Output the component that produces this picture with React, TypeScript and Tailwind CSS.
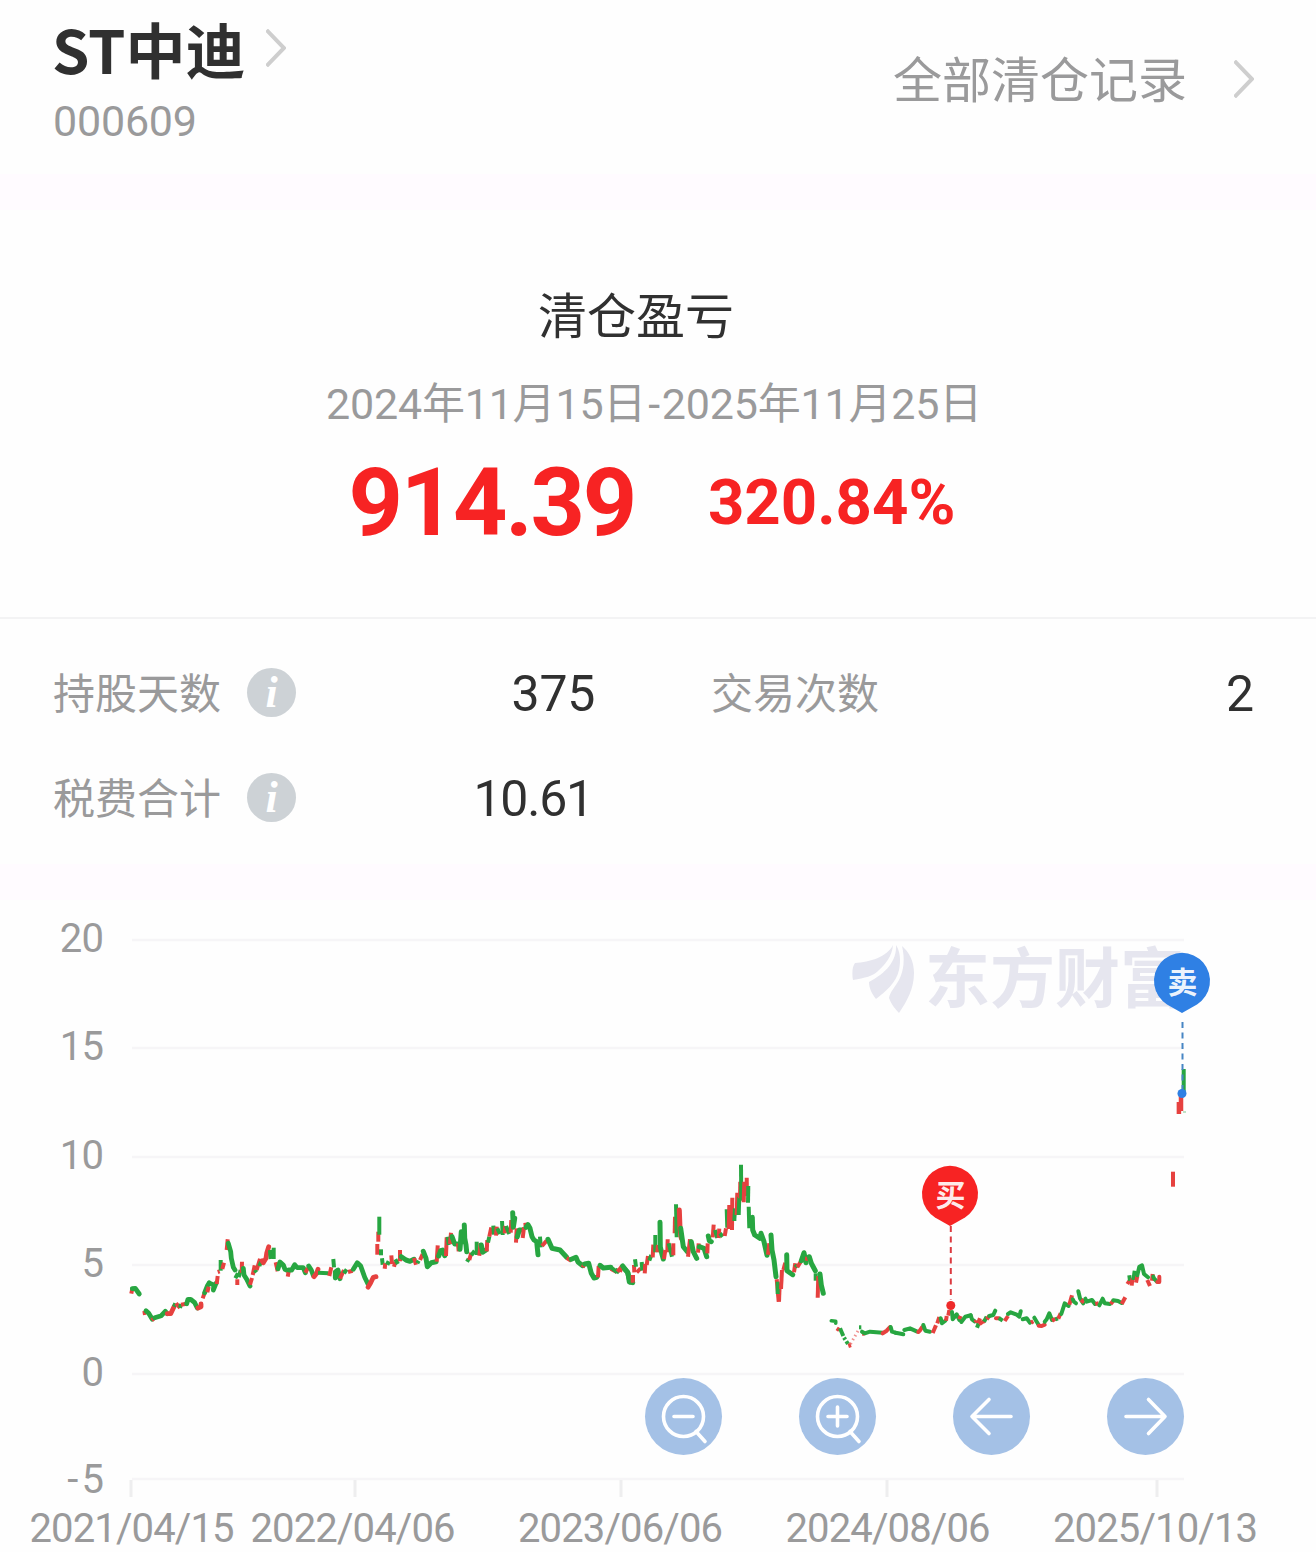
import { useState } from 'react';

type Tone = 'r' | 'g';

interface Section {
  x: number;
  y: number;
  weight: number;
  // "tone x,y x,y ..." with points in thirds of a pixel from the section origin
  strokes: string;
}

const GREEN = '#27a641';
const RED = '#e6413f';

const SECTIONS: Section[] = [
  {
    x: 120, y: 1190, weight: 4.8,
    strokes: `r 34,311 37,296|g 37,296 46,295 58,312|r 68,370 78,368|g 78,362 86,370 97,388|r 95,391 104,383|g 104,383 124,377 136,364 142,371
      |r 142,371 152,371 162,350|g 162,350 166,340|r 168,340 180,354|g 180,354 183,342|r 183,344 200,341|g 200,341 204,328 212,328 224,338 232,354|r 234,354 243,350 243,342
      |r 248,325 254,308|g 254,308 262,288 268,278|r 262,307 266,290|g 268,280 282,285 280,300 288,280|r 290,282 293,258|r 293,246 299,244|g 302,210 302,242|r 307,237 312,218
      |r 320,180 323,148|g 325,160 332,185 334,205 340,232 345,240|g 346,265 354,250|r 352,285 352,268|g 356,262 362,240|r 365,248 366,215|g 370,235 372,255 380,268 390,288
      |r 390,284 396,264|r 398,255 404,226|g 404,240 410,247|r 410,240 420,206|g 418,228 424,215|r 426,212 430,218 438,205 440,190 446,170|g 450,180 452,207|g 461,173 461,207
      |r 467,217 473,244|g 474,236 480,216 490,225 495,238 503,242|r 503,260 506,245|g 506,240 515,240 524,224 532,233 550,233 556,248|r 556,248 564,234|g 566,228 574,240 580,256
      |r 582,260 590,250 594,238|g 594,248 626,250|r 628,258 634,232|g 640,207 642,232|g 646,264 646,246 654,240 660,266|r 660,266 672,240|g 672,250 680,238|r 684,246 698,242
      |g 700,238 712,218 722,228 734,262 744,282|r 744,292 752,278 760,262 768,260|r 772,194 772,162|r 775,155 775,125|g 778,134 778,80`,
  },
  {
    x: 370, y: 1190, weight: 5,
    strokes: `g 33,196 33,178|g 36,205 38,224|r 44,236 46,220|g 48,216 60,222|r 64,196 66,222|r 72,230 76,215|g 76,208 84,222|r 90,180 90,214|g 94,200 108,210 120,214 132,208
      |r 132,204 138,224|g 142,220 146,212|r 150,210 158,192|g 160,184 168,205 172,230 184,218 198,215|r 200,215 203,166|g 206,198 212,182 218,180 224,197|r 228,198 230,142
      |g 233,140 236,165|r 240,162 243,128|g 246,140 254,162 262,162|r 264,160 266,184|g 270,178 274,125 278,155|g 283,105 284,145 288,165 290,185|g 291,215 296,206|r 298,210 304,188
      |g 304,196 314,182|g 320,155 320,195|r 328,197 332,160|g 334,165 338,187 348,180|r 350,184 352,150|g 354,158 358,140|r 358,140 364,112|g 370,107 372,134|r 378,137 380,110
      |g 382,115 390,132|g 396,93 398,135|r 404,130 406,108|g 408,108 418,132|r 422,128 424,90|g 428,68 430,112 434,85|r 438,158 440,115|g 442,140 448,120 454,120|r 458,144 462,112
      |r 466,98 468,118|g 468,112 474,104 480,115 486,140 492,150 500,155 504,194|g 510,140 512,172|r 516,168 530,152|g 534,148 546,175 570,180 590,202|r 590,204 604,212
      |g 604,208 618,202 624,216 638,227|r 638,232 644,220|g 644,222 656,220 664,250 672,264 680,262|r 684,262 686,228|g 690,226 700,234 722,232|r 722,236 740,246|g 736,238 748,248
      |r 750,246 756,226|g 758,230 766,240 774,248 778,276 786,276|r 789,276 789,255`,
  },
  {
    x: 610, y: 1150, weight: 5,
    strokes: `g 0,350 22,367|r 22,365 36,350|g 38,348 52,365 60,396 68,398|r 68,398 68,375|r 72,345 73,367|g 75,328 78,350|r 80,367 92,355|g 95,336 97,362|r 104,370 106,342
      |r 110,345 114,318|g 118,332 124,315|r 128,322 130,284|g 136,255 136,307|r 142,307 144,285|g 150,217 151,290 155,310 160,327|r 162,327 166,300|r 172,307 173,268|g 176,280 186,320
      |r 190,316 190,280|r 194,250 195,200|g 198,163 200,262|r 208,180 210,235 214,265|g 212,235 220,290 232,305|r 234,320 240,268|g 244,275 250,305 260,325|r 264,308 266,280
      |g 268,290 282,295 290,320|r 292,310 293,280|g 295,258 298,272 304,275|r 308,262 311,224|g 315,240 322,264|r 326,264 328,236|g 330,250 338,260|r 344,258 348,235|g 350,178 352,233
      |r 356,237 358,165|r 366,240 367,143|g 373,213 375,175|r 380,195 382,128|g 386,195 388,140|r 390,145 391,95|g 393,44 394,152|r 401,157 403,95|r 410,83 411,138|g 414,158 415,108
      |g 416,170 418,235|g 427,202 428,240 434,255 450,265 453,250 462,275 471,316|r 474,314 478,280|g 483,255 486,300 492,330 498,380|r 500,388 506,455|r 507,455 509,400
      |g 503,432 503,395|r 513,417 516,360|r 520,360 526,338|g 530,314 531,362 548,374|r 552,367 556,340|g 556,352 562,345|r 562,352 572,335|g 574,332 582,308 588,338|r 590,332 592,320
      |g 598,320 604,340 616,362|g 617,370 617,392|r 623,443 625,378|g 630,372 634,405 640,430`,
  },
  {
    x: 610, y: 1150, weight: 3.6,
    strokes: `g 664,512 677,514 677,520|r 680,535 688,540|g 690,535 700,558|g 702,563 706,569|g 709,574 714,582|r 715,588 723,585`,
  },
  {
    x: 850, y: 1150, weight: 4,
    strokes: `g 27,532 34,532|r 36,552 44,550|g 36,545 44,550 60,545 98,548|r 98,550 110,542 120,531|g 122,531 126,545 136,548|g 136,548 145,550 160,553|g 163,540 180,535 200,544|r 205,546 210,541 216,532
      |g 220,525 226,542 240,545|r 248,549 258,526|r 262,520 268,501|g 272,505 276,520 286,512|r 288,512 290,498|r 295,497 298,480|g 306,486 308,508 320,493 328,510|r 328,508 332,498
      |g 334,516 346,500 362,496|g 362,496 366,508 374,514|r 376,518 380,512|g 381,533 386,520|r 384,520 390,505|r 392,520 397,516 402,514|g 402,515 410,500|r 410,508 418,498|g 418,498 430,495 436,482
      |r 438,505 442,505 446,505|g 446,504 458,512|r 464,513 474,498|g 474,492 482,487 500,494 508,500 512,484|g 518,508 530,505 540,518|r 543,518 550,514|g 553,503 560,515 566,525
      |r 566,527 575,528 584,524|g 584,515 590,508 598,490 606,510|r 606,512 616,506|g 616,508 624,505|r 625,506 632,490|g 634,492 644,460 656,468|r 658,464 666,436|g 668,448 672,455 678,460
      |g 685,424 690,445 700,460|r 694,458 702,448|g 706,446 710,455 726,450 735,462|r 736,462 746,460|g 748,466 758,446 764,460 780,462|r 782,462 790,452|g 790,451 804,453 815,459
      |r 815,462 826,442|r 832,402 840,390|g 838,376 840,392|r 845,407 847,385|g 850,390 854,362|r 858,398 862,378|g 862,376 868,350 876,346 882,372 894,382|r 892,390 900,408
      |r 906,392 908,372|g 910,380 912,385 920,394|r 922,396 928,396 928,380|r 969,65 969,110`,
  },
];

const GRID = [
  { value: 20, y: 940 },
  { value: 15, y: 1048 },
  { value: 10, y: 1157 },
  { value: 5, y: 1265 },
  { value: 0, y: 1374 },
  { value: -5, y: 1481 },
];

const DATES = [
  { label: '2021/04/15', tick: 131, x: 132 },
  { label: '2022/04/06', tick: 355, x: 353 },
  { label: '2023/06/06', tick: 621, x: 620.5 },
  { label: '2024/08/06', tick: 887, x: 888 },
  { label: '2025/10/13', tick: 1157, x: 1155.5 },
];

function parseStrokes(section: Section) {
  return section.strokes.split('|').map(part => {
    const [tone, ...points] = part.trim().split(/\s+/);
    const scaled = points.map(p => {
      const [px, py] = p.split(',').map(Number);
      return `${(section.x + px / 3).toFixed(1)},${(section.y + py / 3).toFixed(1)}`;
    });
    const bar = points.length === 2;
    return { tone: tone as Tone, points: scaled.join(' '), bar, width: bar ? 4 : section.weight };
  });
}

function Chevron() {
  return (
    <svg width="20" height="38" viewBox="0 0 20 38" fill="none" stroke="#cecece" strokeWidth="4">
      <path d="M0.5 1 L18 19 L0.5 37" />
    </svg>
  );
}

function InfoDot() {
  return (
    <span className="flex h-[49px] w-[49px] items-center justify-center rounded-full bg-[#cdd2d6] font-['Liberation_Serif',serif] text-[44px] leading-none font-bold text-white italic">
      <span className="mt-px">i</span>
    </span>
  );
}

function Pin({ x, y, color, label }: { x: number; y: number; color: string; label: string }) {
  return (
    <g>
      <path
        d={`M${x} ${y + 32} L${x - 15} ${y + 23.5} A28 28 0 1 1 ${x + 15} ${y + 23.5} Z`}
        fill={color}
      />
      <text x={x + 0.5} y={y + 11.5} textAnchor="middle" fontSize="30" fontWeight="700" fill="#fff" fillOpacity="0.92">{label}</text>
    </g>
  );
}

function Chart() {
  return (
    <svg
      className="block font-[Roboto,'Noto_Sans_CJK_SC',sans-serif]"
      width="1316"
      height="652"
      viewBox="0 900 1316 652"
    >
      {/* Grid and axes */}
      {GRID.map(row => (
        <g key={row.value}>
          <line x1="132" x2="1184" y1={row.value < 0 ? 1479 : row.y} y2={row.value < 0 ? 1479 : row.y} stroke="#f6f5f7" strokeWidth="2.5" />
          <text x="103.5" y={row.y + 12} textAnchor="end" fontSize="40" letterSpacing="-0.6" fill="#9a9a9b">
            {row.value < 0 ? '-' : ''}
            <tspan dx={row.value < 0 ? 4 : 0}>{Math.abs(row.value)}</tspan>
          </text>
        </g>
      ))}
      {DATES.map(d => (
        <g key={d.label}>
          <line x1={d.tick} x2={d.tick} y1="1480" y2="1497" stroke="#eeeeef" strokeWidth="3" />
          <text x={d.x} y="1541.5" textAnchor="middle" fontSize="40" textLength="205" fill="#9a9a9b">{d.label}</text>
        </g>
      ))}

      {/* Brand watermark */}
      <g fill="#e6e6ef">
        <path d="M893 945 C887 957 870 962 855 963 C852 967 852 974 853 980 C865 978 873 976 878 971 C886 964 892 956 893 945 Z" />
        <path d="M896 945 C897 961 886 973 869 982 C869 988 872 994 876 999 C886 991 896 983 899 970 C901 960 900 951 896 945 Z" />
        <path d="M902 946 C905 959 904 970 899 980 C895 987 890 992 889 998 C891 1004 895 1009 899 1013 C907 1001 914 989 914 973 C914 961 909 952 902 946 Z" />
        <text x="925" y="1001.5" fontSize="65" fontWeight="700" className="font-['Noto_Sans_CJK_SC',sans-serif]">东方财富</text>
      </g>

      {/* Price strokes */}
      <g fill="none" strokeWidth="4">
        {SECTIONS.flatMap(parseStrokes).map((s, i) => (
          <polyline
            key={i}
            points={s.points}
            stroke={s.tone === 'r' ? RED : GREEN}
            strokeWidth={s.width}
            strokeLinejoin="round"
            strokeLinecap={s.bar ? 'butt' : 'round'}
          />
        ))}
        <path d="M850.5 1344 L858.5 1330" stroke={RED} strokeWidth="3" strokeDasharray="1.5 3" opacity="0.6" />
        <path d="M1183.7 1069 V1092" stroke={GREEN} />
        <path d="M1178.9 1114 V1102 M1181 1111 V1093" stroke={RED} strokeWidth="4.5" />
        <path d="M1183 1112 H1186" stroke={GREEN} strokeWidth="1.5" opacity="0.4" />
      </g>

      {/* Trades */}
      <line x1="1182.5" x2="1182.5" y1="1022" y2="1090" stroke="#4785c4" strokeWidth="2" strokeDasharray="6 4.5" />
      <circle cx="1182" cy="1093.5" r="4.5" fill="#2f80e4" />
      <Pin x={1182} y={981} color="#2f80e4" label="卖" />
      <line x1="950.8" x2="950.8" y1="1226" y2="1300" stroke="#dc3a40" strokeWidth="2" strokeDasharray="6 4.5" />
      <circle cx="950.8" cy="1305.5" r="4.5" fill="#ee2a2a" />
      <Pin x={950} y={1194} color="#f72323" label="买" />
    </svg>
  );
}

const CONTROLS = [
  { name: 'zoom-out', d: 'M29 38.5 H48 M51 53.5 L60 63.5', lens: true },
  { name: 'zoom-in', d: 'M29 38.5 H48 M38.5 29 V48 M51 53.5 L60 63.5', lens: true },
  { name: 'left', d: 'M58 38.5 H19 M36 21.5 L19 38.5 L36 55.5', lens: false },
  { name: 'right', d: 'M19 38.5 H58 M41.5 21.5 L58 38.5 L41.5 55.5', lens: false },
];

export default function App() {
  const [active, setActive] = useState('');

  return (
    <div className="flex h-[1552px] w-[1316px] flex-col overflow-hidden bg-[#fefefe] font-[Roboto,'Noto_Sans_CJK_SC',sans-serif] text-[#9a9a9b]">
      {/* Header */}
      <header className="flex h-[174px] justify-between pr-[62px] pl-[52px]">
        <div className="pt-[10px]">
          <div className="flex items-center gap-[20px]">
            <h1 className="font-['Noto_Sans_CJK_SC',sans-serif] text-[60px] leading-[76px] font-bold text-[#303030]">ST中迪</h1>
            <Chevron />
          </div>
          <p className="mt-[10px] ml-px text-[43px] leading-[50px] tracking-[-0.2px]">000609</p>
        </div>
        <div className="flex h-[158px] items-center gap-[47px]">
          <span className="pt-[4px] text-[49px] leading-none">全部清仓记录</span>
          <Chevron />
        </div>
      </header>
      <div className="h-[36px] bg-[#fffbff]" />

      {/* Profit summary */}
      <section className="flex h-[409px] flex-col items-center border-b-2 border-[#f3f3f4] pt-[83px]">
        <h2 className="mr-[44px] text-[49px] leading-[50px] text-[#303030]">清仓盈亏</h2>
        <p className="mt-[36px] mr-[8px] text-[43px] leading-[50px] tracking-[-0.2px] whitespace-nowrap">
          2024年11月15日<span className="mx-[2px]">-</span>2025年11月25日
        </p>
        <div className="mt-[24px] mr-[12px] flex items-center gap-[73px] font-bold text-[#f72323]">
          <span className="text-[95px] leading-[100px] tracking-[-2.3px]">914.39</span>
          <span className="text-[63.5px] leading-[100px]">320.84%</span>
        </div>
      </section>

      {/* Details */}
      <section className="grid h-[245px] grid-cols-[542px_1fr] content-start gap-x-[116px] gap-y-[45px] pt-[43px] pr-[62px] pl-[53px] text-[42px] leading-[60px]">
        <div className="flex h-[60px] items-center">
          <span className="mr-[26px] pt-[5px]">持股天数</span>
          <InfoDot />
          <span className="ml-auto pt-[3px] text-[50px] tracking-[-0.3px] text-[#303030]">375</span>
        </div>
        <div className="flex h-[60px] items-center justify-between">
          <span className="pt-[5px]">交易次数</span>
          <span className="pt-[3px] text-[50px] text-[#303030]">2</span>
        </div>
        <div className="flex h-[60px] items-center">
          <span className="mr-[26px] pt-[5px]">税费合计</span>
          <InfoDot />
          <span className="mr-[2px] ml-auto pt-[3px] text-[50px] tracking-[-1.2px] text-[#303030]">10.61</span>
        </div>
      </section>
      <div className="h-[36px] bg-[#fffbff]" />

      {/* Price history */}
      <section className="relative h-[652px]">
        <Chart />
        <div className="absolute top-[478px] left-[645px] flex gap-[77px]">
          {CONTROLS.map(c => (
            <button
              key={c.name}
              type="button"
              aria-pressed={active === c.name}
              onClick={() => setActive(c.name)}
              className="h-[77px] w-[77px] rounded-full bg-[#a4c1e6]"
            >
              <svg width="77" height="77" viewBox="0 0 77 77" fill="none" stroke="#fff" strokeWidth="3.6" strokeLinecap="round" strokeLinejoin="round">
                {c.lens && <circle cx="38.5" cy="38.5" r="20" />}
                <path d={c.d} />
              </svg>
            </button>
          ))}
        </div>
      </section>
    </div>
  );
}
